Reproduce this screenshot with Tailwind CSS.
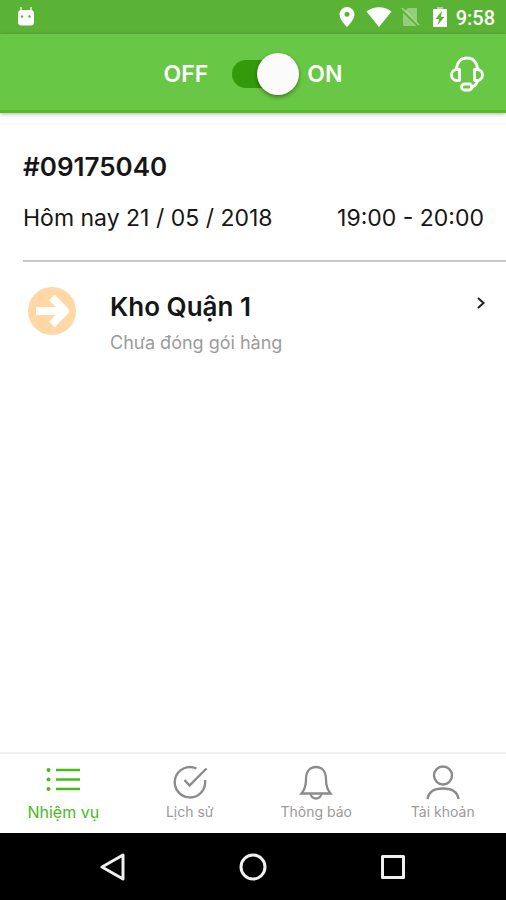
<!DOCTYPE html>
<html lang="vi">
<head>
<meta charset="utf-8">
<meta name="viewport" content="width=device-width, initial-scale=1">
<title>Nhiệm vụ</title>
<script src="https://cdn.jsdelivr.net/npm/@tailwindcss/browser@4"></script>
</head>
<body class="flex min-h-screen flex-col bg-white font-['Inter','Noto_Sans',sans-serif] text-[#161616]">

  <!-- Status bar -->
  <div class="flex h-[34px] items-center bg-[#5bb335] pr-[11px] pl-[17px] text-white">
    <svg class="h-5 w-[18px]" viewBox="0 0 18 20" fill="currentColor" aria-hidden="true">
      <path d="M4 0v5M14 0v5" stroke="currentColor" stroke-width="1.600" opacity=".8"/>
      <rect x="1" y="3" width="16" height="15.500" rx="3.500"/>
      <circle cx="5" cy="9.500" r="1.200" fill="#5bb335"/><circle cx="12.500" cy="9.500" r="1.200" fill="#5bb335"/>
    </svg>
    <div class="ml-auto flex items-center">
      <svg class="h-5 w-4" viewBox="0 0 16 20" aria-hidden="true"><path fill="currentColor" fill-rule="evenodd" d="M8 0a7.500 7.500 0 0 0-7.500 7.500C.5 13 8 20 8 20s7.500-7 7.500-12.500A7.500 7.500 0 0 0 8 0zm0 4.800a2.500 2.500 0 1 1 0 5 2.500 2.500 0 0 1 0-5z"/></svg>
      <svg class="ml-[11px] h-5 w-[26px]" viewBox="0 0 26 20" aria-hidden="true"><path fill="currentColor" d="M.5 4.500C8-1.300 18-1.300 25.500 4.500L13 20z"/></svg>
      <svg class="ml-2 h-5 w-5" viewBox="0 0 20 20" aria-hidden="true"><path fill="currentColor" fill-opacity=".35" d="M8 1h9v18H3V6z"/><path d="M1 2l18 17" stroke="#5bb335" stroke-width="3"/><path d="M2 1l17 17" stroke="currentColor" stroke-opacity=".45" stroke-width="1.500"/></svg>
      <svg class="ml-3 h-5 w-4" viewBox="0 0 16 20" aria-hidden="true"><path fill="currentColor" fill-opacity=".5" d="M5 0h6v3H5z"/><path fill="currentColor" d="M1 2h14v18H1z"/><path fill="#5bb335" d="M10 4L3.500 12h3.800L5.500 18l7-8H8.800z"/></svg>
      <span class="ml-2 pt-[2px] font-['Roboto',sans-serif] text-[20px] leading-6 font-medium">9:58</span>
    </div>
  </div>

  <!-- App bar with the availability switch -->
  <header class="grid h-[79px] grid-cols-[1fr_auto_1fr] items-center border-b-3 border-[#57bd27] bg-[#68c744] pt-[3px] text-white shadow-[0_1px_4px_rgba(0,0,0,0.3)]">
    <span></span>
    <label class="flex items-center text-[23px] leading-7 font-semibold">
      <span>OFF</span>
      <input type="checkbox" role="switch" checked aria-label="OFF / ON" class="relative mr-2 ml-6 h-7 w-[67px] appearance-none before:absolute before:inset-y-0 before:left-0 before:w-14 before:rounded-full before:bg-[#349a0b] after:absolute after:-top-[7px] after:right-0 after:size-[42px] after:rounded-full after:bg-[#fbfbfb] after:shadow-[0_2px_4px_rgba(0,0,0,0.4)]">
      <span>ON</span>
    </label>
    <button type="button" aria-label="Hỗ trợ" class="mr-[21px] justify-self-end">
      <svg class="size-9" viewBox="0 0 36 36" fill="none" stroke="currentColor" stroke-width="2.800" stroke-linejoin="round" stroke-linecap="round">
        <path d="M7.500 13C8 6 12 2 18 2S28 6 28.500 13"/>
        <path d="M10.500 13.500v11H8a5.500 5.500 0 0 1 0-11zM25.500 13.500v11H28a5.500 5.500 0 0 0 0-11z"/>
        <path d="M28.500 25c-1 3.500-3 5.500-6 6.500"/>
        <rect x="12.500" y="28" width="10.500" height="6" rx="3"/>
      </svg>
    </button>
  </header>

  <main class="flex-1 pl-[23px]">
    <section class="border-b-2 border-[#c9c9c9] pt-[38px] pr-[22px] pb-[26px]">
      <h1 class="text-[26px] leading-8 font-semibold">#09175040</h1>
      <div class="mt-[19px] flex justify-between text-[23px] leading-8 whitespace-nowrap">
        <span>Hôm nay 21 / 05 / 2018</span>
        <span>19:00 - 20:00</span>
      </div>
    </section>
    <a href="#kho" class="flex items-start pt-[25px] pr-5 pl-[5px]">
      <svg class="size-12" viewBox="0 0 48 48" aria-hidden="true"><circle cx="24" cy="24" r="24" fill="#ffd8a6"/><path d="M8 24h27M24 10.500L37 24 24 37.500" fill="none" stroke="#fff" stroke-width="8" stroke-linejoin="round"/></svg>
      <span class="ml-[34px] flex flex-1 flex-col">
        <span class="mt-1 text-[26px] leading-8 font-semibold">Kho Quận 1</span>
        <span class="mt-2 text-[18px] leading-6 text-[#9b9b9b]">Chưa đóng gói hàng</span>
      </span>
      <svg class="mt-[9px] h-[14px] w-[10px]" viewBox="0 0 10 14" fill="none" stroke="#222" stroke-width="2" aria-hidden="true"><path d="M2 2l5.500 5L2 12"/></svg>
    </a>
  </main>

  <!-- Tabs -->
  <nav class="grid h-[81px] grid-cols-4 border-t-2 border-[#f1f1f1] pt-[10px] text-[14px] leading-5 text-[#9a9a9a]">
    <a href="#nhiem-vu" aria-current="page" class="flex flex-col items-center gap-[2px] text-[16px] text-[#48ba1c]">
      <svg class="size-9" viewBox="0 0 36 36" stroke="currentColor" stroke-width="2.400" aria-hidden="true"><path d="M11 6h24M11 15.500h24M11 25h24"/><g fill="currentColor" stroke="none"><circle cx="3.500" cy="6" r="2"/><circle cx="3.500" cy="15.500" r="2"/><circle cx="3.500" cy="25" r="2"/></g></svg>
      Nhiệm vụ
    </a>
    <a href="#lich-su" class="flex flex-col items-center gap-[2px]">
      <svg class="size-9" viewBox="0 0 36 36" fill="none" stroke="#8b8b8b" stroke-width="2.400" aria-hidden="true"><path d="M24.500 4.500A15.200 15.200 0 1 0 33 16"/><path d="M12.500 16l5 5.500L34.500 4.500"/></svg>
      Lịch sử
    </a>
    <a href="#thong-bao" class="flex flex-col items-center gap-[2px]">
      <svg class="size-9" viewBox="0 0 36 36" fill="none" stroke="#8b8b8b" stroke-width="2.300" aria-hidden="true"><path d="M3.500 29.500c3.500-4 4.500-8 4.500-14C8 7.500 12 3 18 3s10 4.500 10 12.500c0 6 1 10 4.500 14z"/><path d="M12.500 30c1 3 3 4.500 5.500 4.500s4.500-1.500 5.500-4.500"/></svg>
      Thông báo
    </a>
    <a href="#tai-khoan" class="flex flex-col items-center gap-[2px]">
      <svg class="size-9" viewBox="0 0 36 36" fill="none" stroke="#8b8b8b" stroke-width="2.400" aria-hidden="true"><circle cx="18" cy="11.500" r="9"/><path d="M2.500 35C3.500 28 9.500 24.500 18 24.500S32.500 28 33.500 35"/></svg>
      Tài khoản
    </a>
  </nav>

  <!-- System navigation -->
  <div class="flex h-[67px] items-center justify-center gap-28 bg-black text-[#f0f0f0]">
    <button type="button" aria-label="Quay lại"><svg class="size-7" viewBox="0 0 28 28" fill="none" stroke="currentColor" stroke-width="3" stroke-linejoin="round"><path d="M24 2v24L3 14z"/></svg></button>
    <button type="button" aria-label="Màn hình chính"><svg class="size-7" viewBox="0 0 28 28" fill="none" stroke="currentColor" stroke-width="3"><circle cx="14" cy="14" r="12"/></svg></button>
    <button type="button" aria-label="Ứng dụng gần đây"><svg class="size-7" viewBox="0 0 28 28" fill="none" stroke="currentColor" stroke-width="3" stroke-linejoin="round"><path d="M3.500 3.500h21v21h-21z"/></svg></button>
  </div>
</body>
</html>
